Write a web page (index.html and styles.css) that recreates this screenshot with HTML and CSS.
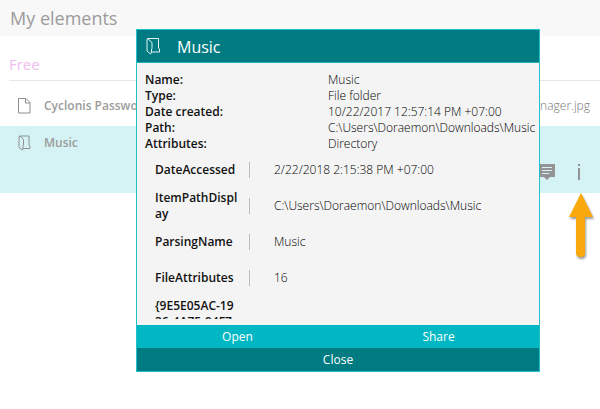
FILE: index.html
```html
<!DOCTYPE html>
<html lang="en">
<head>
    <meta charset="UTF-8">
    <meta name="viewport" content="width=device-width, initial-scale=1.0">
    <title>My elements</title>
    <link rel="stylesheet" href="styles.css">
</head>
<body>
    <header class="page-header">
        <h1>My elements</h1>
    </header>

    <main>
        <h2 class="group-title">Free</h2>
        <ul class="element-list">
            <li class="element">
                <div class="element-row">
                    <svg class="icon" viewBox="0 0 16 18" width="16" height="18">
                        <path d="M2.5 1.5h7.500l4 4v10.500h-11.500zM9.500 1.500v4.500h4.500" />
                    </svg>
                    <span class="element-name">Cyclonis Password</span>
                    <span class="element-file">Manager.jpg</span>
                </div>
            </li>
            <li class="element selected">
                <div class="element-row">
                    <svg class="icon" viewBox="0 0 16 18" width="16" height="18">
                        <path d="M3.500 2h9.500v9l1 1v2.500h-7M3.500 2l-.5 1v10.500l3.500 2.500 .5-1.500v-3l.5-.5v-5.500l-3.500-3.500" />
                    </svg>
                    <span class="element-name">Music</span>
                </div>
                <div class="element-actions">
                    <button type="button" class="action" aria-label="Comment">
                        <svg viewBox="0 0 18 18" width="18" height="18">
                            <path class="bubble" d="M1 1h16v13h-5l-3 3-3-3h-5z" />
                            <path class="bubble-lines" d="M4 4.500h10M4 7.500h10M4 10.500h7" />
                        </svg>
                    </button>
                    <button type="button" class="action" aria-label="Info">
                        <svg viewBox="0 0 18 18" width="18" height="18">
                            <path class="bubble" d="M8 1h2v2h-2zM8 5h2v12h-2z" />
                        </svg>
                    </button>
                </div>
            </li>
        </ul>
    </main>

    <svg class="pointer" viewBox="0 0 32 72" width="32" height="72">
        <path d="M16 3L28 27H20V63Q20 67 16 67Q11 67 11 63V27H4Z" />
    </svg>

    <div class="overlay">
        <section class="dialog" role="dialog" aria-labelledby="dialogTitle">
            <header class="dialog-header">
                <svg class="icon" viewBox="0 0 16 18" width="16" height="18">
                    <path d="M2.500 1.500h11v9.500l1 1v3h-8M2.500 1.500l-.5 1v11.500l3.500 3 1-2v-3l.5-.5v-6l-4.500-4" />
                </svg>
                <h2 id="dialogTitle">Music</h2>
            </header>
            <div class="dialog-body">
                <dl class="summary">
                    <dt>Name:</dt>
                    <dd>Music</dd>
                    <dt>Type:</dt>
                    <dd>File folder</dd>
                    <dt>Date created:</dt>
                    <dd>10/22/2017 12:57:14 PM +07:00</dd>
                    <dt>Path:</dt>
                    <dd>C:\Users\Doraemon\Downloads\Music</dd>
                    <dt>Attributes:</dt>
                    <dd>Directory</dd>
                </dl>
                <dl class="properties">
                    <div class="property">
                        <dt>DateAccessed</dt>
                        <dd>2/22/2018 2:15:38 PM +07:00</dd>
                    </div>
                    <div class="property">
                        <dt>ItemPathDispl<wbr>ay</dt>
                        <dd>C:\Users\Doraemon\Downloads\Music</dd>
                    </div>
                    <div class="property">
                        <dt>ParsingName</dt>
                        <dd>Music</dd>
                    </div>
                    <div class="property">
                        <dt>FileAttributes</dt>
                        <dd>16</dd>
                    </div>
                    <div class="property">
                        <dt>{9E5E05AC-19<wbr>36-4A75-94F7</dt>
                    </div>
                </dl>
            </div>
            <div class="dialog-actions">
                <button type="button">Open</button>
                <button type="button">Share</button>
            </div>
            <button type="button" class="close">Close</button>
        </section>
    </div>
</body>
</html>
```
FILE: styles.css
```css
* {
    box-sizing: border-box;
}

body {
    margin: 0;
    font-family: "Open Sans", "Noto Sans", sans-serif;
    font-size: 12px;
    line-height: 16px;
    color: #000;
    background-color: #fff;
}

h1, h2, ul, dl, dd {
    margin: 0;
    padding: 0;
    font-weight: normal;
}

button {
    font-family: inherit;
    font-size: 12px;
    border: none;
    padding: 0;
    cursor: pointer;
}

.page-header {
    padding: 0 10px;
    background-color: #f8f8f8;
}

.page-header h1 {
    font-size: 18px;
    line-height: 36px;
    color: #9b9b9b;
}

.group-title {
    margin-left: 9px;
    padding-top: 12px;
    font-size: 15px;
    line-height: 32px;
    color: #f0bdf0;
    border-bottom: 1px solid #e8e8e8;
}

.element-list {
    list-style: none;
}

.element {
    height: 45px;
    padding: 16px 10px 0 16px;
    color: #9b9b9b;
}

.element.selected {
    height: 67px;
    padding-top: 8px;
    background-color: #d5f3f5;
}

.element-row {
    display: flex;
    align-items: center;
}

.icon {
    flex: none;
    fill: none;
    stroke: #8f8f8f;
    stroke-width: 1;
}

.element-name {
    margin-left: 12px;
    font-weight: 600;
}

.element-file {
    margin-left: auto;
    font-weight: 300;
    color: #777;
}

.element-actions {
    display: flex;
    justify-content: flex-end;
    gap: 14px;
    padding-top: 11px;
    margin-right: -8px;
}

.action {
    height: 18px;
    background: none;
}

.action:last-child {
    margin-right: 10px;
}

.bubble {
    fill: #949494;
}

.bubble-lines {
    stroke: #d5f3f5;
}

.pointer {
    position: absolute;
    top: 190px;
    right: 3px;
    fill: #f9a90b;
    filter: drop-shadow(1px 2px 1px rgba(0, 0, 0, 0.4));
}

.overlay {
    position: absolute;
    top: 29px;
    left: 136px;
    right: 60px;
}

.dialog {
    background-color: #f4f4f4;
    border: 1px solid #1fc0c9;
}

.dialog-header {
    display: flex;
    align-items: center;
    gap: 16px;
    padding-left: 8px;
    color: #fff;
    background-color: #007b82;
    border-bottom: 1px solid #1fb0b8;
}

.dialog-header .icon {
    stroke: #e3f3f4;
}

.dialog-header h2 {
    font-size: 16px;
    line-height: 30px;
    padding-top: 2px;
}

.dialog-body {
    height: 247px;
    margin-top: 9px;
    margin-bottom: 6px;
    padding-left: 8px;
    overflow: hidden;
}

.summary {
    display: grid;
    grid-template-columns: 183px 1fr;
}

dt {
    font-weight: 600;
    color: #111;
}

dd {
    font-weight: 300;
}

.property {
    display: flex;
    align-items: center;
    min-height: 36px;
    padding-left: 10px;
}

.property dt {
    width: 94px;
}

.property dd {
    padding-left: 24px;
    border-left: 1px solid #bbb;
}

.dialog-actions {
    display: flex;
}

.dialog-actions button {
    flex: 1;
    height: 23px;
    color: #fff;
    background-color: #00b7c3;
}

.close {
    display: block;
    width: 100%;
    height: 23px;
    color: #fff;
    background-color: #007b82;
}
```
